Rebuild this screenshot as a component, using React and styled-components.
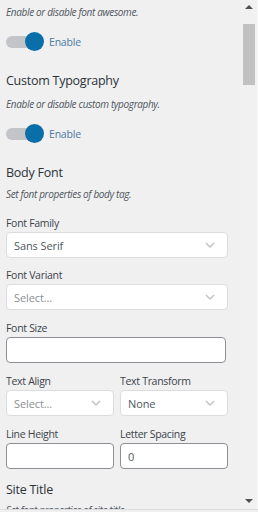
import React from "react";
import styled, { createGlobalStyle } from "styled-components";

const GlobalStyle = createGlobalStyle`
  html, body {
    margin: 0;
    padding: 0;
    background: #f0f0f1;
  }
  * {
    box-sizing: border-box;
  }
`;

const Page = styled.div`
  width: 258px;
  height: 512px;
  overflow: hidden;
  background: #f0f0f1;
  font-family: "Open Sans", "Noto Sans", sans-serif;
`;

const Panel = styled.div`
  display: flex;
  height: 510px;
  border-bottom: 1px solid #dcdcde;
`;

const Content = styled.div`
  flex: 1;
  overflow: hidden;
  padding: 3px 0 0 6px;
`;

const ScrollBar = styled.div`
  width: 17px;
  margin-left: 10px;
  display: flex;
  flex-direction: column;
  background: #f1f1f1;
  border-right: 1px solid #fafafa;
`;

const ScrollButton = styled.div`
  height: ${(p) => p.h}px;
  display: flex;
  align-items: center;
  justify-content: center;
`;

const Arrow = styled.div`
  width: 0;
  height: 0;
  border-left: 4px solid transparent;
  border-right: 4px solid transparent;
  ${(p) =>
    p.up
      ? "border-bottom: 4px solid #505050;"
      : "border-top: 4px solid #505050;"}
`;

const Track = styled.div`
  flex: 1;
  padding: 11px 2px 0 2px;
`;

const Thumb = styled.div`
  height: 61px;
  background: #c1c1c1;
`;

const Heading = styled.div`
  font-size: 12.5px;
  letter-spacing: -0.25px;
  line-height: 20px;
  color: #2c3338;
  margin-top: ${(p) => p.mt || 0}px;
`;

const Description = styled.div`
  font-size: 10px;
  font-style: italic;
  letter-spacing: -0.35px;
  line-height: 18px;
  color: #50575e;
  margin-top: ${(p) => p.mt || 0}px;
`;

const ToggleRow = styled.div`
  display: flex;
  align-items: center;
  height: 20px;
  margin-top: ${(p) => p.mt || 0}px;
`;

const Toggle = styled.span`
  position: relative;
  display: inline-block;
  width: 38px;
  height: 20px;

  &::before {
    content: "";
    position: absolute;
    left: 0;
    top: 4px;
    width: 34px;
    height: 12px;
    border-radius: 6px;
    background: #c3c4c7;
  }

  &::after {
    content: "";
    position: absolute;
    left: 19px;
    top: 0;
    width: 19px;
    height: 19px;
    border-radius: 50%;
    background: #0a6fa8;
  }
`;

const ToggleLabel = styled.span`
  margin-left: 5px;
  font-size: 10.5px;
  letter-spacing: -0.2px;
  color: #4c79a5;
`;

const Label = styled.div`
  font-size: 10.5px;
  letter-spacing: -0.3px;
  line-height: 16px;
  color: #3c434a;
  margin-bottom: 1px;
`;

const Field = styled.div`
  width: ${(p) => p.w}px;
  margin-top: ${(p) => p.mt || 0}px;
`;

const Row = styled.div`
  display: flex;
  gap: 6px;
  margin-top: ${(p) => p.mt || 0}px;
`;

const SelectBox = styled.div`
  height: 26px;
  display: flex;
  align-items: center;
  justify-content: space-between;
  padding: 0 12px 0 7px;
  background: #fff;
  border: 1px solid #dcdcde;
  border-radius: 4px;
  font-size: 11px;
  letter-spacing: -0.1px;
  color: ${(p) => (p.placeholder ? "#8c8f94" : "#50575e")};
`;

const InputBox = styled.div`
  height: 26px;
  display: flex;
  align-items: center;
  padding: 0 7px;
  background: #fff;
  border: 1px solid #8c8f94;
  border-radius: 4px;
  font-size: 11px;
  color: #50575e;
`;

const Chevron = () => (
  <svg width="10" height="6" viewBox="0 0 10 6">
    <polyline
      points="1,1 5,5 9,1"
      fill="none"
      stroke="#c3c4c7"
      strokeWidth="1.5"
    />
  </svg>
);

function Select({ value, placeholder }) {
  return (
    <SelectBox placeholder={placeholder ? 1 : 0}>
      <span>{value || "Select..."}</span>
      <Chevron />
    </SelectBox>
  );
}

export default function App() {
  return (
    <Page>
      <GlobalStyle />
      <Panel>
        <Content>
          <Description>Enable or disable font awesome.</Description>
          <ToggleRow mt={11}>
            <Toggle />
            <ToggleLabel>Enable</ToggleLabel>
          </ToggleRow>

          <Heading mt={19}>Custom Typography</Heading>
          <Description mt={4}>Enable or disable custom typography.</Description>
          <ToggleRow mt={11}>
            <Toggle />
            <ToggleLabel>Enable</ToggleLabel>
          </ToggleRow>

          <Heading mt={19}>Body Font</Heading>
          <Description mt={2}>Set font properties of body tag.</Description>

          <Field w={222} mt={12}>
            <Label>Font Family</Label>
            <Select value="Sans Serif" />
          </Field>
          <Field w={222} mt={9}>
            <Label>Font Variant</Label>
            <Select placeholder />
          </Field>
          <Field w={220} mt={10}>
            <Label>Font Size</Label>
            <InputBox />
          </Field>

          <Row mt={10}>
            <Field w={108}>
              <Label>Text Align</Label>
              <Select placeholder />
            </Field>
            <Field w={108}>
              <Label>Text Transform</Label>
              <Select value="None" />
            </Field>
          </Row>
          <Row mt={10}>
            <Field w={108}>
              <Label>Line Height</Label>
              <InputBox />
            </Field>
            <Field w={108}>
              <Label>Letter Spacing</Label>
              <InputBox>0</InputBox>
            </Field>
          </Row>

          <Heading mt={11}>Site Title</Heading>
          <Description mt={1}>Set font properties of site title.</Description>
        </Content>
        <ScrollBar>
          <ScrollButton h={13}>
            <Arrow up />
          </ScrollButton>
          <Track>
            <Thumb />
          </Track>
          <ScrollButton h={16}>
            <Arrow />
          </ScrollButton>
        </ScrollBar>
      </Panel>
    </Page>
  );
}
